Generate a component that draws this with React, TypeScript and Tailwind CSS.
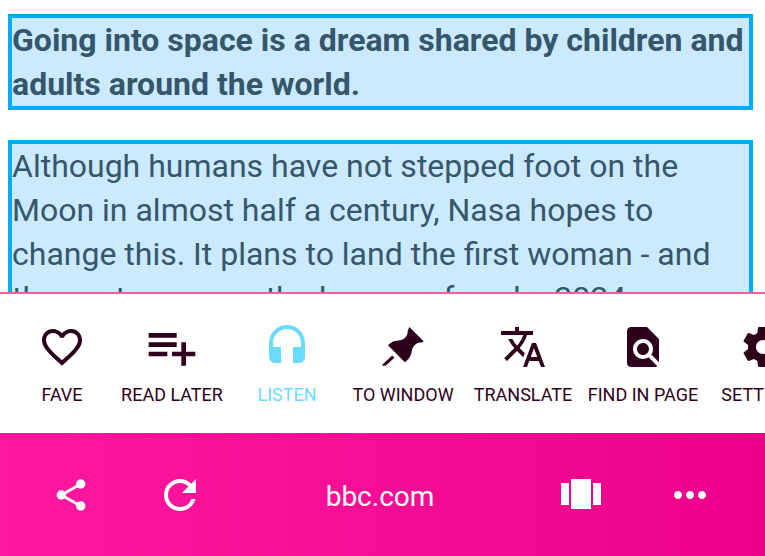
import { MdFavoriteBorder, MdHeadset, MdTranslate, MdFindInPage, MdRefresh, MdMoreHoriz } from "react-icons/md";
import type { ReactNode } from "react";

function PlaylistAddIcon() {
  return (
    <svg viewBox="0 0 24 24" className="size-14 fill-current" aria-hidden="true">
      <path d="M14 10H2v2h12v-2zm0-4H2v2h12V6zm4 8v-4h-2v4h-4v2h4v4h2v-4h4v-2h-4zM2 16h8v-2H2v2z" />
    </svg>
  );
}

function PinIcon() {
  return (
    <svg viewBox="0 0 48 48" className="size-12 fill-current" aria-hidden="true">
      <path d="M30.3 4 44.7 18.3 43.4 19.2C38 19.3 34.6 21.8 33.2 26.2 32 30.5 32.6 34.2 25.8 39.3L9 22.3C13.5 17.5 16.5 18 21 17.2 26.5 16.2 28.8 12.3 28.7 8Z" />
      <path d="M13.2 32.6 15.4 34.8 6.5 42.7H3.5V41.5Z" />
    </svg>
  );
}

function SettingsIcon() {
  return (
    <svg viewBox="0 0 24 24" className="size-12 fill-current" aria-hidden="true">
      <path d="M19.43 12.98c.04-.32.07-.64.07-.98s-.03-.66-.07-.98l2.11-1.65c.19-.15.24-.42.12-.64l-2-3.46c-.12-.22-.39-.3-.61-.22l-2.49 1c-.52-.4-1.08-.73-1.69-.98l-.38-2.65C14.46 2.18 14.25 2 14 2h-4c-.25 0-.46.18-.49.42l-.38 2.65c-.61.25-1.17.59-1.69.98l-2.49-1c-.23-.09-.49 0-.61.22l-2 3.46c-.13.22-.07.49.12.64l2.11 1.65c-.04.32-.07.65-.07.98s.03.66.07.98l-2.11 1.65c-.19.15-.24.42-.12.64l2 3.46c.12.22.39.3.61.22l2.49-1c.52.4 1.08.73 1.69.98l.38 2.65c.03.24.24.42.49.42h4c.25 0 .46-.18.49-.42l.38-2.65c.61-.25 1.17-.59 1.69-.98l2.49 1c.23.09.49 0 .61-.22l2-3.46c.12-.22.07-.49-.12-.64l-2.11-1.65zM12 15.5c-1.93 0-3.5-1.57-3.5-3.5s1.57-3.5 3.5-3.5 3.5 1.57 3.5 3.5-1.57 3.5-3.5 3.5z" />
    </svg>
  );
}

function ShareIcon() {
  return (
    <svg viewBox="0 0 48 48" className="size-12" aria-hidden="true">
      <path d="M33.7 13 14.3 24 33.7 35" fill="none" stroke="currentColor" strokeWidth="2.8" />
      <g fill="currentColor">
        <circle cx="33.7" cy="13" r="4.7" />
        <circle cx="14.3" cy="24" r="4.7" />
        <circle cx="33.7" cy="35" r="4.7" />
      </g>
    </svg>
  );
}

function TabsIcon() {
  return (
    <svg viewBox="0 0 24 24" className="size-12 fill-current" aria-hidden="true">
      <path d="M7 19h10V4H7v15zm-5-2h4V6H2v11zM18 6v11h4V6h-4z" />
    </svg>
  );
}

type Action = { label: string; icon: ReactNode; width: string; active?: boolean };

const actions: Action[] = [
  { label: "FAVE", icon: <MdFavoriteBorder className="size-12" />, width: "w-[110px]" },
  { label: "READ LATER", icon: <PlaylistAddIcon />, width: "w-[110px]" },
  { label: "LISTEN", icon: <MdHeadset className="size-12" />, width: "w-[120px]", active: true },
  { label: "TO WINDOW", icon: <PinIcon />, width: "w-28" },
  { label: "TRANSLATE", icon: <MdTranslate className="size-12" />, width: "w-32" },
  { label: "FIND IN PAGE", icon: <MdFindInPage className="size-12" />, width: "w-28" },
  { label: "SETTINGS", icon: <SettingsIcon />, width: "w-32" },
];

function BarButton({ label, children }: { label: string; children: ReactNode }) {
  return (
    <button type="button" aria-label={label} className="flex w-[109px] shrink-0 justify-center">
      {children}
    </button>
  );
}

export default function App() {
  return (
    <div className="flex h-screen flex-col overflow-hidden bg-white font-[Roboto,sans-serif]">
      <main className="flex min-h-0 flex-1 flex-col gap-[30px] overflow-hidden pt-3.5 pr-3 pl-2 text-[32px] leading-[44px] text-[#35566b]">
        <p className="shrink-0 border-4 border-[#00aaff] bg-[#cceaff] font-bold">
          Going into space is a dream shared by children and adults around the world.
        </p>
        <p className="shrink-0 border-4 border-[#00aaff] bg-[#cceaff]">
          Although humans have not stepped foot on the Moon in almost half a century, Nasa hopes to change this. It
          plans to land the first woman - and the next man - on the lunar surface by 2024.
        </p>
      </main>

      <nav
        aria-label="Page actions"
        className="flex shrink-0 overflow-hidden border-t-2 border-[#fa5c9c] bg-white pt-[25px] pb-[26px] pl-[7px] text-[#2e001c]"
      >
        {actions.map((a) => (
          <button
            key={a.label}
            type="button"
            aria-pressed={a.active ?? false}
            className={`flex shrink-0 flex-col items-center gap-2 ${a.width} ${a.active ? "text-[#6bdaff]" : ""}`}
          >
            <span className="flex h-14 items-center">{a.icon}</span>
            <span className="text-[18px] leading-6 whitespace-nowrap">{a.label}</span>
          </button>
        ))}
      </nav>

      <footer className="flex h-[123px] shrink-0 items-center bg-linear-to-r from-[#ff179f] to-[#ec008b] pr-[21px] pl-4 text-white">
        <BarButton label="Share">
          <ShareIcon />
        </BarButton>
        <BarButton label="Reload">
          <MdRefresh className="size-12" />
        </BarButton>
        <button type="button" className="min-w-0 flex-1 truncate pt-1 text-center text-[28px] leading-9">
          bbc.com
        </button>
        <BarButton label="Tabs">
          <TabsIcon />
        </BarButton>
        <BarButton label="More">
          <MdMoreHoriz className="size-12" />
        </BarButton>
      </footer>
    </div>
  );
}
